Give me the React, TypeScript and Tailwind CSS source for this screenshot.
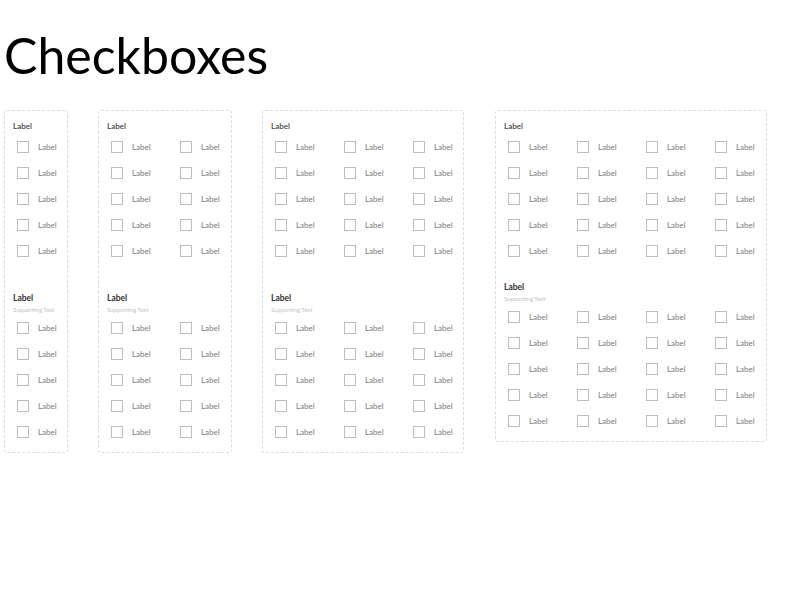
import React from 'react';

const font = { fontFamily: '"Lato", "Noto Sans", sans-serif' };

const Checkbox = ({ label }: { label: string }) => (
  <label className="flex h-[26px] items-center">
    <span className="block h-[12px] w-[12px] shrink-0 border border-[#bdbdbd] bg-white" />
    <span className="ml-[9px] text-[8px] leading-none text-[#7a7a7a]">{label}</span>
  </label>
);

const Group = ({
  cols,
  supporting,
  strong,
}: {
  cols: number;
  supporting?: boolean;
  strong?: boolean;
}) => {
  const items = Array.from({ length: cols * 5 });
  return (
    <div>
      <div
        className={
          strong
            ? 'h-[12px] text-[8.5px] font-bold leading-[12px] text-[#333]'
            : 'h-[12px] text-[8px] font-semibold leading-[12px] text-[#444]'
        }
      >
        Label
      </div>
      {supporting ? (
        <div className="h-[11px] text-[6px] leading-[11px] text-[#c4c4c4]">Supporting Text</div>
      ) : (
        <div className="h-[2px]" />
      )}
      <div
        className={
          cols === 1
            ? 'grid grid-cols-[69px] pl-[4px]'
            : cols === 2
            ? 'grid grid-cols-[69px_69px] pl-[4px]'
            : cols === 3
            ? 'grid grid-cols-[69px_69px_69px] pl-[4px]'
            : 'grid grid-cols-[69px_69px_69px_69px] pl-[4px]'
        }
      >
        {items.map((_, i) => (
          <Checkbox key={i} label="Label" />
        ))}
      </div>
    </div>
  );
};

const Panel = ({ cols, width, compact }: { cols: number; width: string; compact?: boolean }) => (
  <div
    className={`${width} rounded-[3px] border border-dashed border-[#dcdcdc] pb-[7px] pl-[8px] pt-[9px]`}
  >
    <Group cols={cols} />
    <div className={compact ? 'mt-[17px]' : 'mt-[28px]'}>
      <Group cols={cols} supporting strong />
    </div>
  </div>
);

export default function App() {
  return (
    <div className="min-h-[600px] w-[800px] bg-white antialiased" style={font}>
      <h1 className="pl-[4px] pt-[25px] text-[50px] font-normal leading-[60px] text-black">
        Checkboxes
      </h1>
      <div className="mt-[25px] flex items-start gap-[30px] pl-[4px]">
        <Panel cols={1} width="w-[64px]" />
        <Panel cols={2} width="w-[134px]" />
        <Panel cols={3} width="w-[202px]" />
        <div className="ml-[1px]">
          <Panel cols={4} width="w-[272px]" compact />
        </div>
      </div>
    </div>
  );
}
